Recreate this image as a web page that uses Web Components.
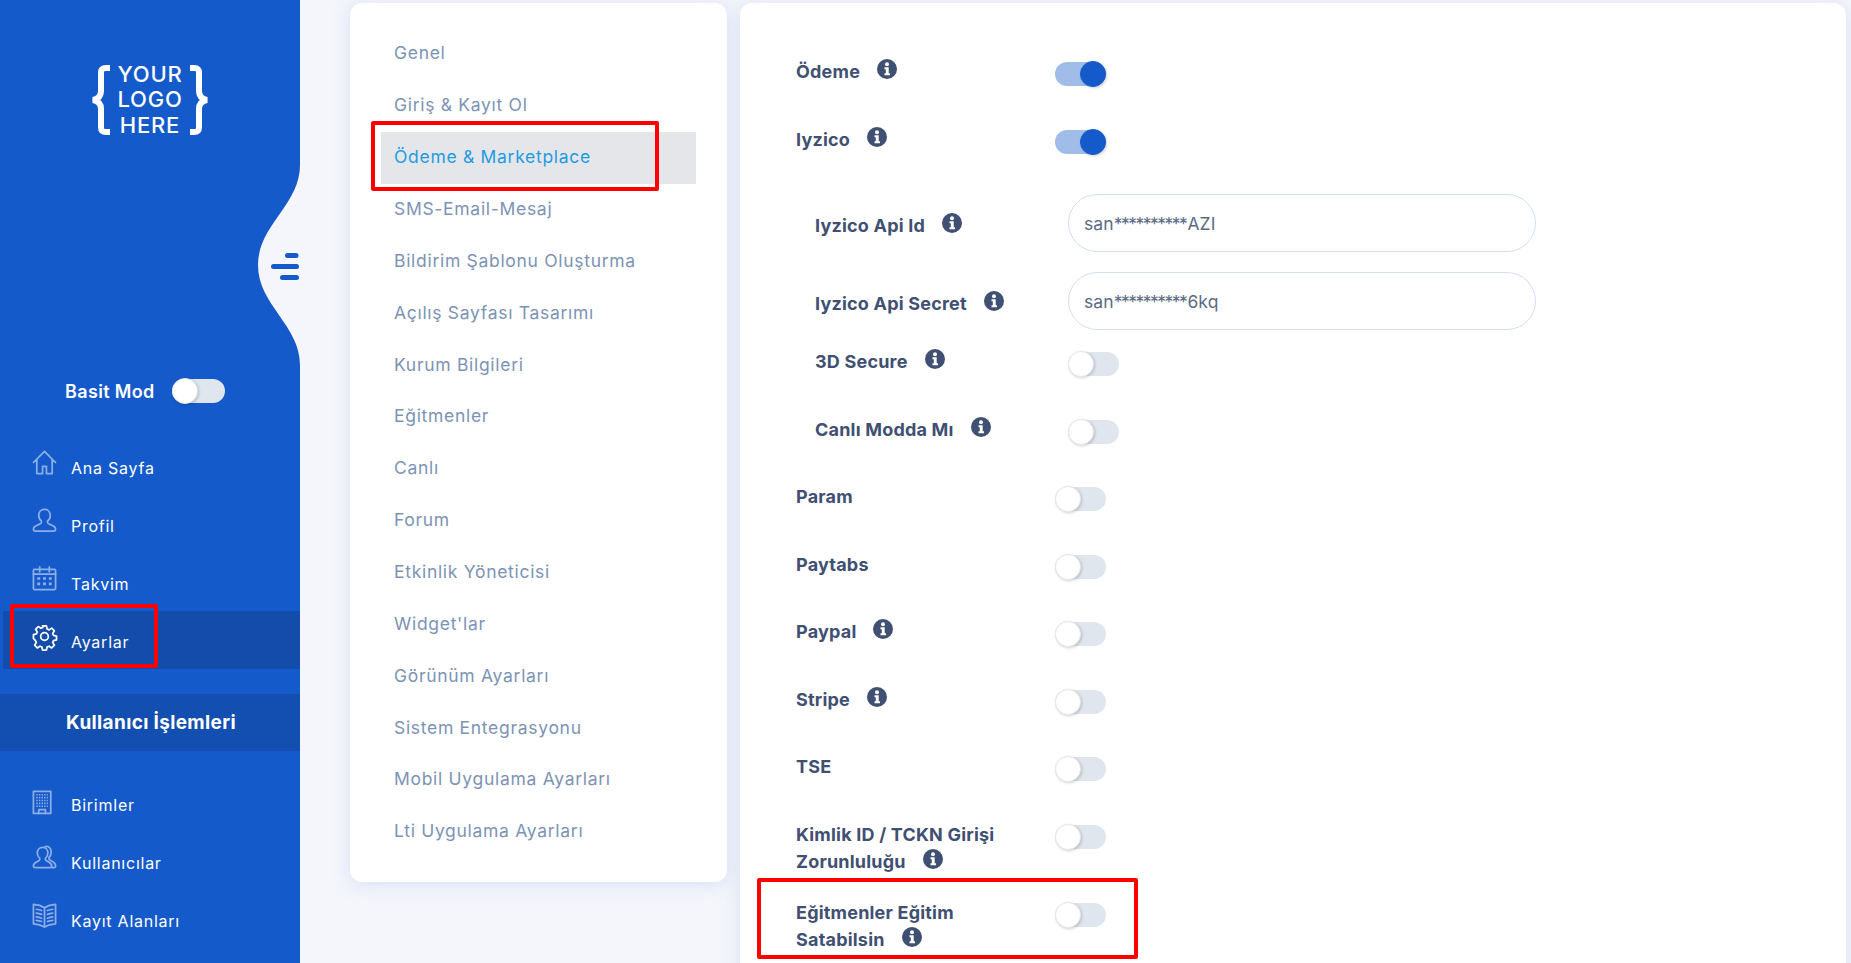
<!DOCTYPE html>
<html lang="tr">
<head>
<meta charset="utf-8">
<title>Ayarlar</title>
<style>
    html, body { margin: 0; height: 100%; overflow: hidden; background: #f4f6fb; }
    body { font-family: Inter, "Noto Sans", sans-serif; }
</style>
</head>
<body>
<app-shell>
    <side-bar slot="side">
        <nav-item icon="home">Ana Sayfa</nav-item>
        <nav-item icon="user">Profil</nav-item>
        <nav-item icon="calendar">Takvim</nav-item>
        <nav-item icon="gear" active>Ayarlar</nav-item>
        <nav-title>Kullanıcı İşlemleri</nav-title>
        <nav-item icon="building" style="margin-top:23px">Birimler</nav-item>
        <nav-item icon="users">Kullanıcılar</nav-item>
        <nav-item icon="book">Kayıt Alanları</nav-item>
    </side-bar>
    <settings-menu slot="menu">
        <menu-item>Genel</menu-item>
        <menu-item>Giriş &amp; Kayıt Ol</menu-item>
        <menu-item active>Ödeme &amp; Marketplace</menu-item>
        <menu-item>SMS-Email-Mesaj</menu-item>
        <menu-item>Bildirim Şablonu Oluşturma</menu-item>
        <menu-item>Açılış Sayfası Tasarımı</menu-item>
        <menu-item>Kurum Bilgileri</menu-item>
        <menu-item>Eğitmenler</menu-item>
        <menu-item>Canlı</menu-item>
        <menu-item>Forum</menu-item>
        <menu-item>Etkinlik Yöneticisi</menu-item>
        <menu-item>Widget'lar</menu-item>
        <menu-item>Görünüm Ayarları</menu-item>
        <menu-item>Sistem Entegrasyonu</menu-item>
        <menu-item>Mobil Uygulama Ayarları</menu-item>
        <menu-item>Lti Uygulama Ayarları</menu-item>
    </settings-menu>
    <settings-panel slot="panel">
        <form-row label="Ödeme" info on></form-row>
        <form-row label="Iyzico" info on></form-row>
        <form-row label="Iyzico Api Id" info nested value="san**********AZI" style="margin-top:19px"></form-row>
        <form-row label="Iyzico Api Secret" info nested value="san**********6kq" style="margin-top:20px"></form-row>
        <form-row label="3D Secure" info nested></form-row>
        <form-row label="Canlı Modda Mı" info nested></form-row>
        <form-row label="Param"></form-row>
        <form-row label="Paytabs"></form-row>
        <form-row label="Paypal" info></form-row>
        <form-row label="Stripe" info></form-row>
        <form-row label="TSE"></form-row>
        <form-row label="Kimlik ID / TCKN Girişi Zorunluluğu" info></form-row>
        <form-row label="Eğitmenler Eğitim Satabilsin" info style="margin-top:2px"></form-row>
    </settings-panel>
    <red-mark style="left:371px;top:121px;width:288px;height:70px"></red-mark>
    <red-mark style="left:10px;top:604px;width:148px;height:64px"></red-mark>
    <red-mark style="left:757px;top:878px;width:381px;height:81px"></red-mark>
</app-shell>

<script>
const ICONS = {
    home: '<path d="M1.500 13 13 1.500 24.500 13M5 10v14.500h6V17h4v7.500h6V10"/>',
    user: '<path d="M13 1.500c-3.600 0-6 2.700-6 6.300 0 2.500 1 4.500 2.800 5.700v1.800c0 2-8.300 2.300-8.300 6.500 0 1.500.7 2.200 2 2.200h19c1.300 0 2-.7 2-2.200 0-4.200-8.300-4.500-8.300-6.500v-1.800c1.800-1.200 2.800-3.200 2.800-5.700 0-3.600-2.400-6.300-6-6.300z"/>',
    calendar: '<rect x="1.500" y="3.500" width="23" height="21" rx="1"/><path d="M1.500 8.500h23M8 1v5M18 1v5"/><path stroke-width="2.800" stroke-linecap="butt" d="M5.500 13h3M11.500 13h3M17.500 13h3M5.500 18.500h3M11.500 18.500h3M17.500 18.500h3"/>',
    gear: '<circle cx="13" cy="13" r="4"/><path d="M11 2h4l.7 3.200 2 .9 2.800-1.800 2.800 2.800-1.800 2.800.9 2 3.100.7v4l-3.100.7-.9 2 1.800 2.800-2.800 2.800-2.800-1.800-2 .9-.7 3.200h-4l-.7-3.200-2-.9-2.800 1.800-2.800-2.800 1.800-2.800-.9-2L1.500 15v-4l3.100-.7.9-2L3.700 5.500l2.800-2.800 2.800 1.800 2-.9z"/>',
    building: '<g transform="translate(0 3)"><rect x="1.500" y="1.500" width="18" height="23"/><path stroke-width="1.700" stroke-linecap="butt" stroke-dasharray="1.500 1.200" d="M4.500 5h12M4.500 8h12M4.500 11h12M4.500 14h12M4.500 17h12"/><path d="M7 24.500v-4h7v4"/></g>',
    users: '<path d="M11 2.500c-3.200 0-5.500 2.500-5.500 5.800 0 2.300 1 4.200 2.500 5.300v1.800c0 1.800-6.500 2.200-6.500 6.100 0 1.400.6 2 1.800 2h15.400c1.200 0 1.800-.6 1.800-2 0-3.900-6.500-4.300-6.500-6.100v-1.800c1.500-1.100 2.500-3 2.500-5.300 0-3.300-2.300-5.800-5.500-5.800z"/><path d="M13.500 1.800c3.400-1.200 6.500 1 6.500 5.500 0 2.500-1 4.500-2.300 5.500v2c0 1.200 6.800 2.500 6.800 6.700 0 1.300-.6 2-1.800 2h-2"/>',
    book: '<path d="M13 5C10 3 6 1.800 1.500 1.500v20.300c4.500.3 8.500 1.400 11.500 3.200 3-1.800 7-2.900 11.500-3.200V1.500C20 1.800 16 3 13 5zM13 5v20"/><path d="M4.500 6.500c1.800.2 3.700.6 5.500 1.300M4.500 10.500c1.800.2 3.700.6 5.500 1.300M4.500 14.500c1.800.2 3.700.6 5.500 1.300M4.500 18c1.800.2 3.700.6 5.500 1.300M21.500 6.500c-1.800.2-3.700.6-5.500 1.300M21.500 10.500c-1.800.2-3.700.6-5.500 1.300M21.500 14.500c-1.800.2-3.700.6-5.500 1.300M21.500 18c-1.800.2-3.700.6-5.500 1.300"/>'
}

class AppShell extends HTMLElement {
    constructor() {
        super()
        this.attachShadow({ mode: "open" }).innerHTML = /*html*/`
            <style>
                :host { display: flex; position: relative; height: 963px; overflow: hidden; background: #f4f6fb; }
                .main { flex: 1; display: flex; align-items: flex-start; gap: 13px; padding: 3px 5px 0 50px; min-width: 0; }
            </style>
            <slot name="side"></slot>
            <div class="main">
                <slot name="menu"></slot>
                <slot name="panel"></slot>
            </div>
            <slot></slot>
        `
    }
}

class SideBar extends HTMLElement {
    constructor() {
        super()
        this.attachShadow({ mode: "open" }).innerHTML = /*html*/`
            <style>
                :host { display: block; position: relative; flex: 0 0 300px; height: 963px; background: #155aca; color: #fff; }
                .wave { position: absolute; left: 250px; top: 160px; }
                .logo { display: flex; justify-content: center; align-items: center; gap: 5px; padding-top: 64px; height: 72px; }
                .logo-text { font-size: 22px; line-height: 25.500px; font-weight: 500; text-align: center; width: 68px; letter-spacing: .8px; }
                .mode { display: flex; align-items: center; gap: 17px; margin: 241px 0 0 65px; height: 28px; font-size: 18px; font-weight: 600; letter-spacing: .35px; }
                .mode toggle-switch { width: 53px; }
                .nav { margin-top: 32px; }
            </style>
            <svg class="wave" width="50" height="210" viewBox="250 160 50 210">
                <path fill="#f4f6fb" d="M300 165C300 205 258 225 258 265C258 305 300 325 300 365Z"/>
                <g fill="#155aca">
                    <rect x="285" y="253" width="13.500" height="5" rx="2.500"/>
                    <rect x="271" y="264" width="28" height="5" rx="2.500"/>
                    <rect x="280" y="275" width="19" height="5" rx="2.500"/>
                </g>
            </svg>
            <div class="logo">
                <svg width="22" height="70" viewBox="0 0 22 70" fill="none" stroke="#fff" stroke-width="6"><path d="M21 3h-4c-4 0-5 2-5 5v18c0 5-3 8-8 9 5 1 8 4 8 9v18c0 3 1 5 5 5h4"/></svg>
                <div class="logo-text">YOUR<br>LOGO<br>HERE</div>
                <svg width="22" height="70" viewBox="0 0 22 70" fill="none" stroke="#fff" stroke-width="6"><path d="M1 3h4c4 0 5 2 5 5v18c0 5 3 8 8 9-5 1-8 4-8 9v18c0 3-1 5-5 5H1"/></svg>
            </div>
            <div class="mode">Basit Mod <toggle-switch></toggle-switch></div>
            <div class="nav"><slot></slot></div>
        `
    }
}

class NavItem extends HTMLElement {
    constructor() {
        super()
        const active = this.hasAttribute("active")
        this.attachShadow({ mode: "open" }).innerHTML = /*html*/`
            <style>
                :host { display: block; }
                .item { display: flex; align-items: center; gap: 14px; height: 58px; padding-left: 32px; font-size: 16px; font-weight: 400; letter-spacing: .75px; box-sizing: border-box; }
                :host([active]) .item { margin-left: 3px; padding-left: 29px; background: #134cab; }
                svg { flex: none; margin-top: -8px; overflow: visible; fill: none; stroke: ${active ? "#fff" : "#8eaee8"}; stroke-width: 1.800; stroke-linejoin: round; stroke-linecap: round; }
                span { margin-top: 4px; }
            </style>
            <div class="item">
                <svg width="25" height="25" viewBox="0 0 26 26">${ICONS[this.getAttribute("icon")]}</svg>
                <span><slot></slot></span>
            </div>
        `
    }
}

class NavTitle extends HTMLElement {
    constructor() {
        super()
        this.attachShadow({ mode: "open" }).innerHTML = /*html*/`
            <style>
                :host { display: flex; align-items: center; justify-content: center; height: 57px; margin-top: 25px; padding-left: 2px; background: #134fb0; font-size: 19px; font-weight: 700; letter-spacing: .35px; }
            </style>
            <slot></slot>
        `
    }
}

class SettingsMenu extends HTMLElement {
    constructor() {
        super()
        this.attachShadow({ mode: "open" }).innerHTML = /*html*/`
            <style>
                :host { display: block; flex: 0 0 377px; box-sizing: border-box; height: 879px; padding: 25px 31px 25px 31px; background: #fff; border-radius: 12px; box-shadow: 0 2px 18px rgba(160, 180, 230, .35); }
            </style>
            <slot></slot>
        `
    }
}

class MenuItem extends HTMLElement {
    constructor() {
        super()
        this.attachShadow({ mode: "open" }).innerHTML = /*html*/`
            <style>
                :host { display: flex; align-items: center; box-sizing: border-box; height: 51.870px; padding: 0 0 2px 13px; font-size: 17.500px; color: #7c93b5; letter-spacing: .7px; }
                :host([active]) { background: #e5e6ea; color: #1d9be2; }
            </style>
            <slot></slot>
        `
    }
}

class SettingsPanel extends HTMLElement {
    constructor() {
        super()
        this.attachShadow({ mode: "open" }).innerHTML = /*html*/`
            <style>
                :host { display: block; flex: 1; min-width: 0; box-sizing: border-box; height: 1000px; padding: 37px 0 0 56px; background: #fff; border-radius: 12px; box-shadow: 0 2px 18px rgba(160, 180, 230, .35); }
            </style>
            <slot></slot>
        `
    }
}

class FormRow extends HTMLElement {
    constructor() {
        super()
        const value = this.getAttribute("value")
        const info = this.hasAttribute("info") ? "<info-icon></info-icon>" : ""
        const control = value !== null
            ? `<text-field value="${value}"></text-field>`
            : `<toggle-switch${this.hasAttribute("on") ? " on" : ""}></toggle-switch>`
        this.attachShadow({ mode: "open" }).innerHTML = /*html*/`
            <style>
                :host { display: flex; box-sizing: border-box; min-height: 67.500px; padding-top: 20px; padding-bottom: 4px; color: #3f5072; font-size: 18px; line-height: 27px; font-weight: 700; letter-spacing: .2px; }
                :host([value]) { min-height: 58px; padding: 0; align-items: center; }
                .label { flex: 0 0 219px; margin: -2px 40px 0 0; }
                :host([value]) .label { margin-top: 5px; }
                :host([nested]) { padding-left: 19px; }
                :host([nested]) .label { flex-basis: 213px; }
                toggle-switch { margin-top: 1px; }
            </style>
            <div class="label">${this.getAttribute("label")}${info}</div>
            ${control}
        `
    }
}

class InfoIcon extends HTMLElement {
    constructor() {
        super()
        this.attachShadow({ mode: "open" }).innerHTML = /*html*/`
            <style>
                :host { display: inline-block; width: 20px; height: 20px; margin-left: 17px; vertical-align: -1px; }
                svg { display: block; }
            </style>
            <svg width="20" height="20" viewBox="0 0 20 20">
                <circle cx="10" cy="10" r="10" fill="#3f5072"/>
                <circle cx="10" cy="5.300" r="2" fill="#fff"/>
                <path fill="#fff" d="M7.500 8.300h4.200v6h1.300v2H7.500v-2h1.300v-4H7.500z"/>
            </svg>
        `
    }
}

class ToggleSwitch extends HTMLElement {
    constructor() {
        super()
        this.attachShadow({ mode: "open" }).innerHTML = /*html*/`
            <style>
                :host { display: inline-block; position: relative; flex: none; width: 51px; height: 26px; }
                .track { position: absolute; inset: 1px 0; border-radius: 12px; background: #dfe6ee; }
                .thumb { position: absolute; left: 0; top: 0; width: 26px; height: 26px; box-sizing: border-box; border-radius: 50%; background: #fff; border: 1px solid #e8e8e8; box-shadow: 1px 1px 3px rgba(0, 0, 0, .18); }
                :host([on]) .track { background: #a0bce8; }
                :host([on]) .thumb { left: 25px; background: #155aca; border-color: #155aca; }
            </style>
            <div class="track"></div>
            <div class="thumb"></div>
        `
    }
}

class TextField extends HTMLElement {
    constructor() {
        super()
        const value = this.getAttribute("value").replace(/\*+/, m => `<span>${m}</span>`)
        this.attachShadow({ mode: "open" }).innerHTML = /*html*/`
            <style>
                :host { display: flex; align-items: center; box-sizing: border-box; width: 468px; height: 58px; padding: 0 15px; border: 1px solid #cfe0f5; border-radius: 29px; background: #fff; color: #5b6b86; font-size: 17.500px; font-weight: 400; letter-spacing: .1px; }
                span { letter-spacing: -1.500px; margin-right: 1px; }
            </style>
            <div>${value}</div>
        `
    }
}

class RedMark extends HTMLElement {
    constructor() {
        super()
        this.attachShadow({ mode: "open" }).innerHTML = /*html*/`
            <style>
                :host { display: block; position: absolute; box-sizing: border-box; border: 4px solid #ff0000; border-radius: 2px; }
            </style>
        `
    }
}

customElements.define("app-shell", AppShell)
customElements.define("side-bar", SideBar)
customElements.define("nav-item", NavItem)
customElements.define("nav-title", NavTitle)
customElements.define("settings-menu", SettingsMenu)
customElements.define("menu-item", MenuItem)
customElements.define("settings-panel", SettingsPanel)
customElements.define("form-row", FormRow)
customElements.define("info-icon", InfoIcon)
customElements.define("toggle-switch", ToggleSwitch)
customElements.define("text-field", TextField)
customElements.define("red-mark", RedMark)
</script>
</body>
</html>
